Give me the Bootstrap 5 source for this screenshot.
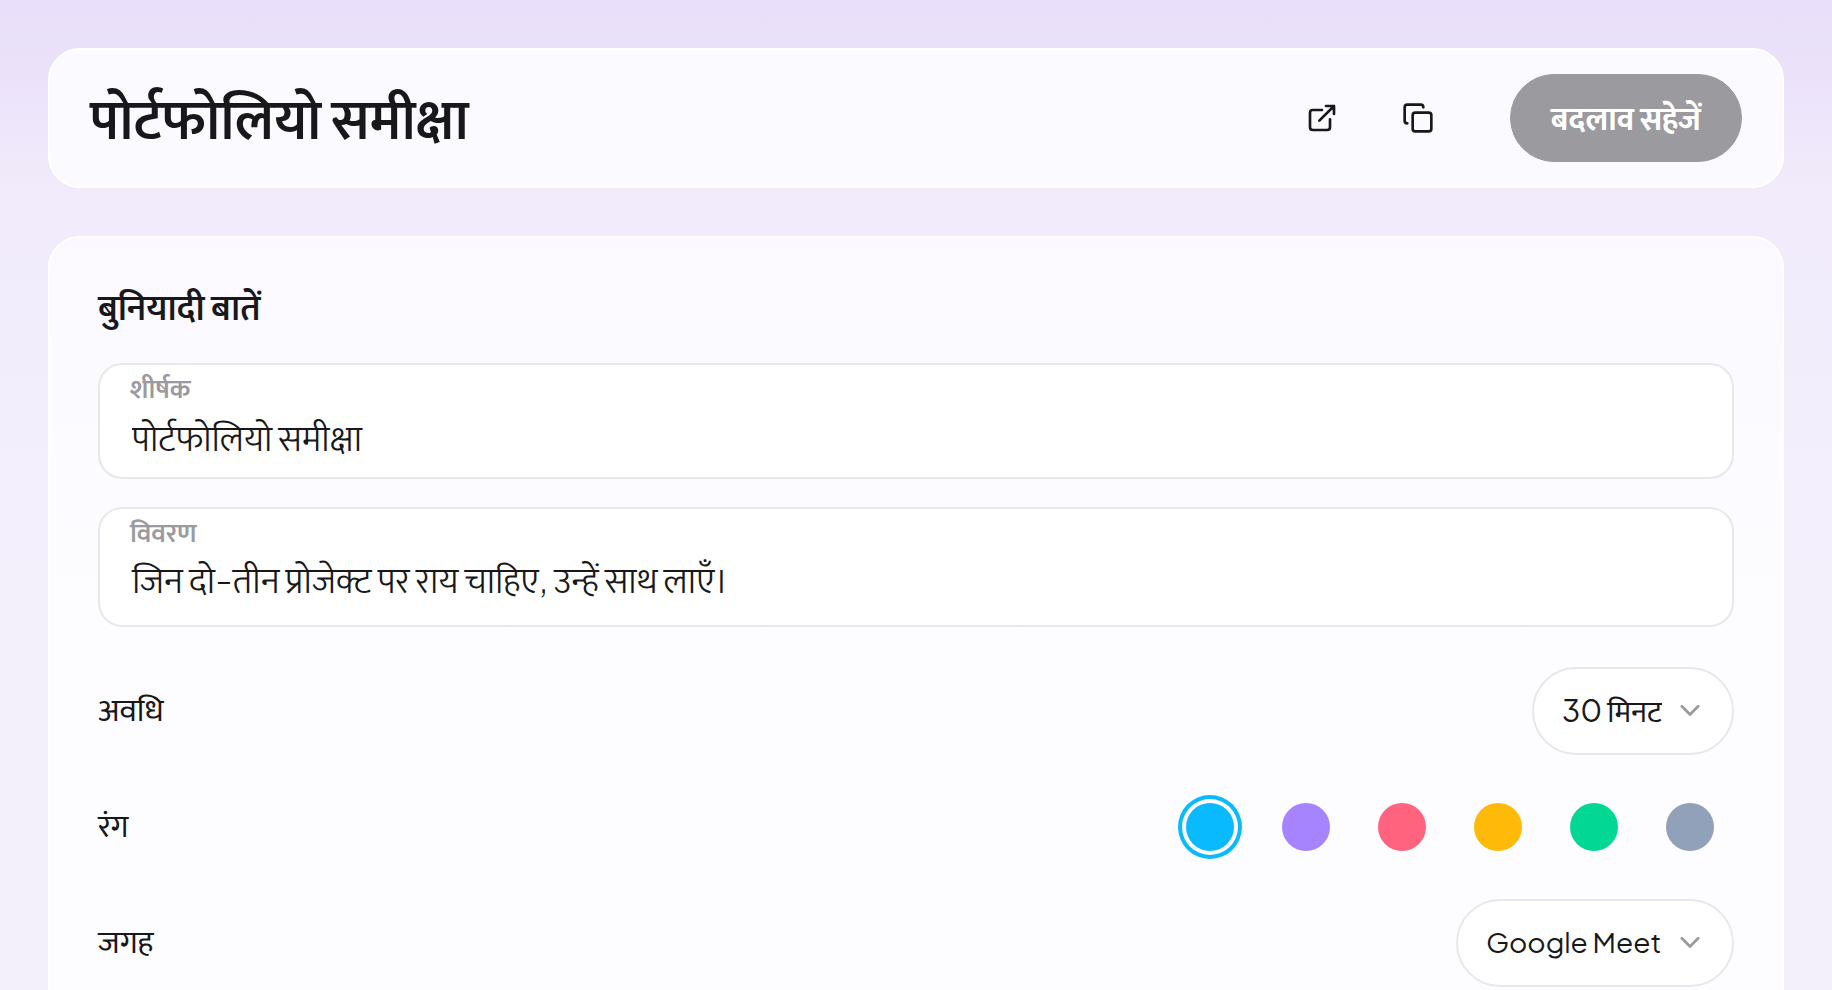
<!DOCTYPE html>
<html lang="hi">
<head>
<meta charset="utf-8">
<meta name="viewport" content="width=device-width, initial-scale=1">
<title>पोर्टफोलियो समीक्षा</title>
<link href="https://cdn.jsdelivr.net/npm/bootstrap@5.3.0/dist/css/bootstrap.min.css" rel="stylesheet">
<style>
  :root { --ink: #18181b; --muted: #9b9a9f; --line: #e8e8ec; }
  body {
    font-family: "Plus Jakarta Sans", "Mukta", "Noto Sans Devanagari", "Noto Sans", sans-serif;
    font-size: 32px; line-height: 40px; color: var(--ink);
    background: linear-gradient(#e8def9 0, #ebe2fa 70px, #f1ebfb 190px, #f3effc 500px, #f3f0fb 100%);
  }
  .scroller { scrollbar-width: none; }
  .page { padding: 48px; gap: 48px; }
  .panel { background: linear-gradient(#fbf9ff, #fdfdff 50%); border: 2px solid #fff; border-radius: 32px; }
  .topbar { padding: 24px 40px; background: #fbfaff; }
  .topbar h1 { font-size: 56px; line-height: 64px; font-weight: 600; padding-bottom: 4px; }
  .topbar-actions { gap: 24px; }
  .icon-btn { width: 72px; height: 72px; color: var(--ink); }
  .save { height: 88px; padding: 0 40px 2px; margin-left: 32px; font-size: 32px; font-weight: 700; }
  .save:disabled { background: var(--muted); border-color: var(--muted); color: #fff; opacity: 1; }
  .details { padding: 48px; }
  .details h2 { font-size: 36px; line-height: 40px; font-weight: 600; margin-bottom: 37px; }
  .fields { gap: 28px; margin-bottom: 40px; }
  .field { background: #fff; border: 2px solid var(--line); border-radius: 24px; padding: 8px 30px; }
  .field label { font-size: 27px; line-height: 28px; font-weight: 600; color: var(--muted); }
  .field .form-control { font-size: 36px; line-height: 68px; font-weight: 300; color: var(--ink); resize: none; overflow: hidden; padding: 0 2px; }
  .title-input { height: 68px; padding-top: 4px !important; }
  .note-input { height: 72px; }
  .settings { gap: 28px; }
  .setting { height: 88px; }
  .setting-name { padding-bottom: 6px; }
  .pill {
    height: 88px; border: 2px solid var(--line); padding: 0 70px 2px 28px; font-size: 28px; color: var(--ink);
    background-color: #fff; background-size: 28px; background-position: right 28px center;
    background-image: url("data:image/svg+xml,%3Csvg xmlns='http://www.w3.org/2000/svg' viewBox='0 0 24 24' fill='none' stroke='%239b9a9f' stroke-width='2.4' stroke-linecap='round' stroke-linejoin='round'%3E%3Cpath d='m5 8 7 7 7-7'/%3E%3C/svg%3E");
  }
  .pill:lang(hi) { font-size: 30px; }
  .swatches { gap: 48px; padding-right: 20px; }
  .swatch { appearance: none; width: 48px; height: 48px; border-radius: 50%; background: var(--tone); margin: 0; }
  .swatch:checked { box-shadow: 0 0 0 4px #fff, 0 0 0 8px var(--tone); }
  .sky { --tone: #0abaff; } .violet { --tone: #a684ff; } .rose { --tone: #ff637e; }
  .amber { --tone: #ffb909; } .mint { --tone: #02d894; } .slate { --tone: #90a1b9; }
</style>
</head>
<body>
<div class="scroller vh-100 overflow-auto">
  <main class="page d-flex flex-column">
    <header class="panel topbar d-flex align-items-center justify-content-between">
      <h1 class="m-0">पोर्टफोलियो समीक्षा</h1>
      <div class="topbar-actions d-flex align-items-center">
        <a href="#" class="icon-btn d-flex align-items-center justify-content-center" aria-label="खोलें">
          <svg width="32" height="32" viewBox="0 0 24 24" fill="none" stroke="currentColor" stroke-width="2" stroke-linecap="round" stroke-linejoin="round"><path d="M15 3h6v6M10 14 21 3M18 13v6a2 2 0 0 1-2 2H5a2 2 0 0 1-2-2V8a2 2 0 0 1 2-2h7"/></svg>
        </a>
        <button type="button" class="btn icon-btn p-0 d-flex align-items-center justify-content-center" aria-label="कॉपी करें">
          <svg width="32" height="32" viewBox="0 0 24 24" fill="none" stroke="currentColor" stroke-width="2" stroke-linecap="round" stroke-linejoin="round"><rect x="8" y="8" width="14" height="14" rx="2"/><path d="M4 16a2 2 0 0 1-2-2V4a2 2 0 0 1 2-2h10a2 2 0 0 1 2 2"/></svg>
        </button>
        <button type="button" class="btn save rounded-pill" disabled>बदलाव सहेजें</button>
      </div>
    </header>

    <form class="panel details">
      <h2>बुनियादी बातें</h2>
      <div class="fields d-flex flex-column">
        <div class="field d-flex flex-column">
          <label for="title">शीर्षक</label>
          <input id="title" type="text" class="form-control title-input border-0 bg-transparent shadow-none" value="पोर्टफोलियो समीक्षा">
        </div>
        <div class="field d-flex flex-column">
          <label for="note">विवरण</label>
          <textarea id="note" rows="1" class="form-control note-input border-0 bg-transparent shadow-none">जिन दो-तीन प्रोजेक्ट पर राय चाहिए, उन्हें साथ लाएँ।</textarea>
        </div>
      </div>
      <div class="settings d-flex flex-column">
        <div class="setting d-flex align-items-center justify-content-between">
          <label class="setting-name" for="duration">अवधि</label>
          <select id="duration" class="form-select pill w-auto rounded-pill"><option>30 मिनट</option></select>
        </div>
        <div class="setting d-flex align-items-center justify-content-between" role="radiogroup" aria-labelledby="tone-label">
          <span class="setting-name" id="tone-label">रंग</span>
          <div class="swatches d-flex">
            <input type="radio" name="tone" class="swatch sky" aria-label="आसमानी" checked>
            <input type="radio" name="tone" class="swatch violet" aria-label="बैंगनी">
            <input type="radio" name="tone" class="swatch rose" aria-label="गुलाबी">
            <input type="radio" name="tone" class="swatch amber" aria-label="पीला">
            <input type="radio" name="tone" class="swatch mint" aria-label="हरा">
            <input type="radio" name="tone" class="swatch slate" aria-label="स्लेटी">
          </div>
        </div>
        <div class="setting d-flex align-items-center justify-content-between">
          <label class="setting-name" for="place">जगह</label>
          <select id="place" lang="en" class="form-select pill w-auto rounded-pill"><option>Google Meet</option></select>
        </div>
      </div>
    </form>
  </main>
</div>
<script src="https://cdn.jsdelivr.net/npm/bootstrap@5.3.0/dist/js/bootstrap.bundle.min.js"></script>
</body>
</html>
